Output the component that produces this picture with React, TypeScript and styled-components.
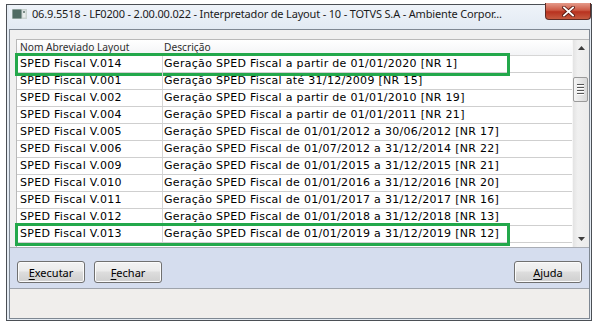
import styled, { createGlobalStyle } from 'styled-components';

const GlobalStyle = createGlobalStyle`
  html, body {
    margin: 0;
    padding: 0;
    background: #ffffff;
  }
`;

const LAYOUTS = [
  { nome: 'SPED Fiscal V.014', descricao: 'Geração SPED Fiscal a partir de 01/01/2020 [NR 1]', marked: true },
  { nome: 'SPED Fiscal V.001', descricao: 'Geração SPED Fiscal até 31/12/2009 [NR 15]' },
  { nome: 'SPED Fiscal V.002', descricao: 'Geração SPED Fiscal a partir de 01/01/2010 [NR 19]' },
  { nome: 'SPED Fiscal V.004', descricao: 'Geração SPED Fiscal a partir de 01/01/2011 [NR 21]' },
  { nome: 'SPED Fiscal V.005', descricao: 'Geração SPED Fiscal de 01/01/2012 a 30/06/2012 [NR 17]' },
  { nome: 'SPED Fiscal V.006', descricao: 'Geração SPED Fiscal de 01/07/2012 a 31/12/2014 [NR 22]' },
  { nome: 'SPED Fiscal V.009', descricao: 'Geração SPED Fiscal de 01/01/2015 a 31/12/2015 [NR 21]' },
  { nome: 'SPED Fiscal V.010', descricao: 'Geração SPED Fiscal de 01/01/2016 a 31/12/2016 [NR 20]' },
  { nome: 'SPED Fiscal V.011', descricao: 'Geração SPED Fiscal de 01/01/2017 a 31/12/2017 [NR 16]' },
  { nome: 'SPED Fiscal V.012', descricao: 'Geração SPED Fiscal de 01/01/2018 a 31/12/2018 [NR 13]' },
  { nome: 'SPED Fiscal V.013', descricao: 'Geração SPED Fiscal de 01/01/2019 a 31/12/2019 [NR 12]', marked: true },
];

const WindowIcon = () => (
  <svg width="15" height="10" viewBox="0 0 15 10">
    <rect x="0" y="0" width="15" height="10" fill="#c9d2d0" />
    <rect x="0.5" y="0.5" width="9" height="9" fill="#4f6b64" />
    <rect x="10.5" y="1.5" width="3" height="7" fill="#e8eceb" />
    <rect x="11" y="2" width="2" height="2" fill="#7d8f8a" />
  </svg>
);

const CloseGlyph = () => (
  <svg width="13" height="11" viewBox="0 0 13 11">
    <path d="M2 1.5 L11 9.5 M11 1.5 L2 9.5" stroke="#5a1a12" strokeWidth="3.6" strokeLinecap="square" />
    <path d="M2 1.5 L11 9.5 M11 1.5 L2 9.5" stroke="#ffffff" strokeWidth="1.8" strokeLinecap="square" />
  </svg>
);

const ArrowUp = () => (
  <svg width="7" height="4" viewBox="0 0 7 4">
    <path d="M0 4 L3.5 0 L7 4 Z" fill="#3c3c3c" />
  </svg>
);

const ArrowDown = () => (
  <svg width="7" height="4" viewBox="0 0 7 4">
    <path d="M0 0 L3.5 4 L7 0 Z" fill="#3c3c3c" />
  </svg>
);

interface ButtonProps {
  hotkey: string;
  rest: string;
}

const DialogButton = ({ hotkey, rest }: ButtonProps) => (
  <Button>
    <u>{hotkey}</u>
    {rest}
  </Button>
);

export default function App() {
  return (
    <>
      <GlobalStyle />
      <Screen>
        <Window>
          <TitleBar>
            <WindowIcon />
            <Title>06.9.5518 - LF0200 - 2.00.00.022 - Interpretador de Layout - 10 - TOTVS S.A - Ambiente Corpor...</Title>
            <CloseButton>
              <CloseGlyph />
            </CloseButton>
          </TitleBar>
          <Client>
            <ListArea>
              <List>
                <Table>
                  <HeaderRow>
                    <HeaderCell $width={146} $pad={3}>Nom Abreviado Layout</HeaderCell>
                    <HeaderCell $pad={1}>Descrição</HeaderCell>
                  </HeaderRow>
                  {LAYOUTS.map((item) => (
                    <Row key={item.nome}>
                      <NameCell>{item.nome}</NameCell>
                      <DescCell>{item.descricao}</DescCell>
                      {item.marked && <Marker />}
                    </Row>
                  ))}
                </Table>
                <Scrollbar>
                  <ScrollArrow>
                    <ArrowUp />
                  </ScrollArrow>
                  <Track>
                    <Thumb>
                      <Grip />
                      <Grip />
                      <Grip />
                      <Grip />
                    </Thumb>
                  </Track>
                  <ScrollArrow>
                    <ArrowDown />
                  </ScrollArrow>
                </Scrollbar>
              </List>
            </ListArea>
            <Toolbar>
              <DialogButton hotkey="E" rest="xecutar" />
              <DialogButton hotkey="F" rest="echar" />
              <Spacer />
              <DialogButton hotkey="A" rest="juda" />
            </Toolbar>
            <StatusBar />
          </Client>
        </Window>
      </Screen>
    </>
  );
}

const Screen = styled.div`
  width: 596px;
  height: 322px;
  overflow: hidden;
  background: #ffffff;
  display: flex;
  flex-direction: column;
  padding-top: 4px;
  box-sizing: border-box;
`;

const Window = styled.div`
  margin-left: 6px;
  width: 586px;
  height: 317px;
  box-sizing: border-box;
  border: 1px solid #4b4f55;
  background: #e4ebf3;
  display: flex;
  flex-direction: column;
  padding: 0 1px 1px 2px;
`;

const TitleBar = styled.div`
  height: 24px;
  display: flex;
  align-items: flex-start;
  padding-left: 3px;
  padding-top: 4px;
  box-sizing: border-box;
  background: linear-gradient(#eef3f9, #e2eaf3);
  svg {
    flex: none;
  }
`;

const Title = styled.div`
  margin-left: 5px;
  margin-top: -3px;
  font-family: 'Noto Sans', sans-serif;
  font-size: 11px;
  letter-spacing: -0.17px;
  line-height: 16px;
  color: #1b1b1b;
  white-space: nowrap;
  flex: 1;
  overflow: hidden;
`;

const CloseButton = styled.div`
  flex: none;
  width: 46px;
  height: 17px;
  margin-top: -6px;
  margin-right: -1px;
  box-sizing: border-box;
  border: 1px solid #5e2b25;
  border-top: none;
  border-radius: 0 0 4px 4px;
  background: linear-gradient(#e59a8a, #cc5a45 45%, #b8321f 55%, #c65a40);
  display: flex;
  align-items: center;
  justify-content: center;
`;

const Client = styled.div`
  flex: 1;
  border: 1px solid #7e8792;
  background: #f0f0f0;
  display: flex;
  flex-direction: column;
  min-height: 0;
`;

const ListArea = styled.div`
  padding: 9px 0 0 6px;
`;

const List = styled.div`
  height: 208px;
  display: flex;
  background: #ffffff;
  border-left: 1px solid #b9b9b9;
  border-top: 1px solid #b9b9b9;
  box-sizing: border-box;
`;

const Table = styled.div`
  flex: 1;
  display: flex;
  flex-direction: column;
  font-family: 'DejaVu Sans', sans-serif;
  font-size: 11px;
  letter-spacing: 0.3px;
  color: #000000;
`;

const HeaderRow = styled.div`
  height: 15px;
  display: flex;
  background: linear-gradient(#ffffff, #f3f4f6);
  border-bottom: 1px solid #d6d6d6;
`;

const HeaderCell = styled.div<{ $width?: number; $pad: number }>`
  width: ${(p) => (p.$width ? `${p.$width}px` : 'auto')};
  flex: ${(p) => (p.$width ? 'none' : '1')};
  padding-left: ${(p) => p.$pad}px;
  box-sizing: border-box;
  font-family: 'Noto Sans', sans-serif;
  font-size: 10.2px;
  letter-spacing: 0;
  line-height: 15px;
  color: #2e2e2e;
  white-space: nowrap;
`;

const Row = styled.div`
  position: relative;
  height: 17px;
  display: flex;
  border-bottom: 1px solid #cfcfcf;
  box-sizing: border-box;
  line-height: 16px;
  white-space: nowrap;
`;

const NameCell = styled.div`
  width: 146px;
  flex: none;
  padding-left: 3px;
  box-sizing: border-box;
  border-right: 1px solid #d6d6d6;
`;

const DescCell = styled.div`
  flex: 1;
  padding-left: 1px;
`;

const Marker = styled.div`
  position: absolute;
  left: -2px;
  top: -3px;
  width: 495px;
  height: 23px;
  box-sizing: border-box;
  border: 3px solid #23a84b;
`;

const Scrollbar = styled.div`
  width: 16px;
  flex: none;
  display: flex;
  flex-direction: column;
  background: linear-gradient(90deg, #e3e3e3, #f0f0f0 30%, #ebebeb);
  border-left: 1px solid #f7f7f7;
`;

const ScrollArrow = styled.div`
  height: 16px;
  display: flex;
  align-items: center;
  justify-content: center;
`;

const Track = styled.div`
  flex: 1;
  padding-top: 21px;
`;

const Thumb = styled.div`
  width: 15px;
  height: 25px;
  box-sizing: border-box;
  border: 1px solid #9a9a9a;
  border-radius: 2px;
  background: linear-gradient(90deg, #f4f4f4, #e6e6e6 50%, #d8d8d8);
  display: flex;
  flex-direction: column;
  align-items: center;
  justify-content: center;
  gap: 1px;
`;

const Grip = styled.div`
  width: 7px;
  height: 1px;
  background: #555555;
  border-bottom: 1px solid #ffffff;
`;

const Toolbar = styled.div`
  height: 42px;
  box-sizing: border-box;
  border-top: 1px solid #a9adb5;
  border-bottom: 1px solid #9ea3ab;
  background: #d5ddee;
  display: flex;
  align-items: flex-start;
  gap: 9px;
  padding: 13px 7px 0 7px;
`;

const Spacer = styled.div`
  flex: 1;
`;

const Button = styled.div`
  width: 68px;
  height: 22px;
  box-sizing: border-box;
  border: 1px solid #707070;
  border-radius: 3px;
  background: linear-gradient(#f3f3f3, #ebebeb 45%, #dddddd 50%, #cfcfcf);
  box-shadow: inset 0 0 0 1px #fbfbfb;
  display: flex;
  align-items: center;
  justify-content: center;
  font-family: 'Noto Sans', sans-serif;
  font-size: 11px;
  color: #000000;
  u {
    text-underline-offset: 2px;
  }
`;

const StatusBar = styled.div`
  flex: 1;
  background: #f0eeec;
`;
